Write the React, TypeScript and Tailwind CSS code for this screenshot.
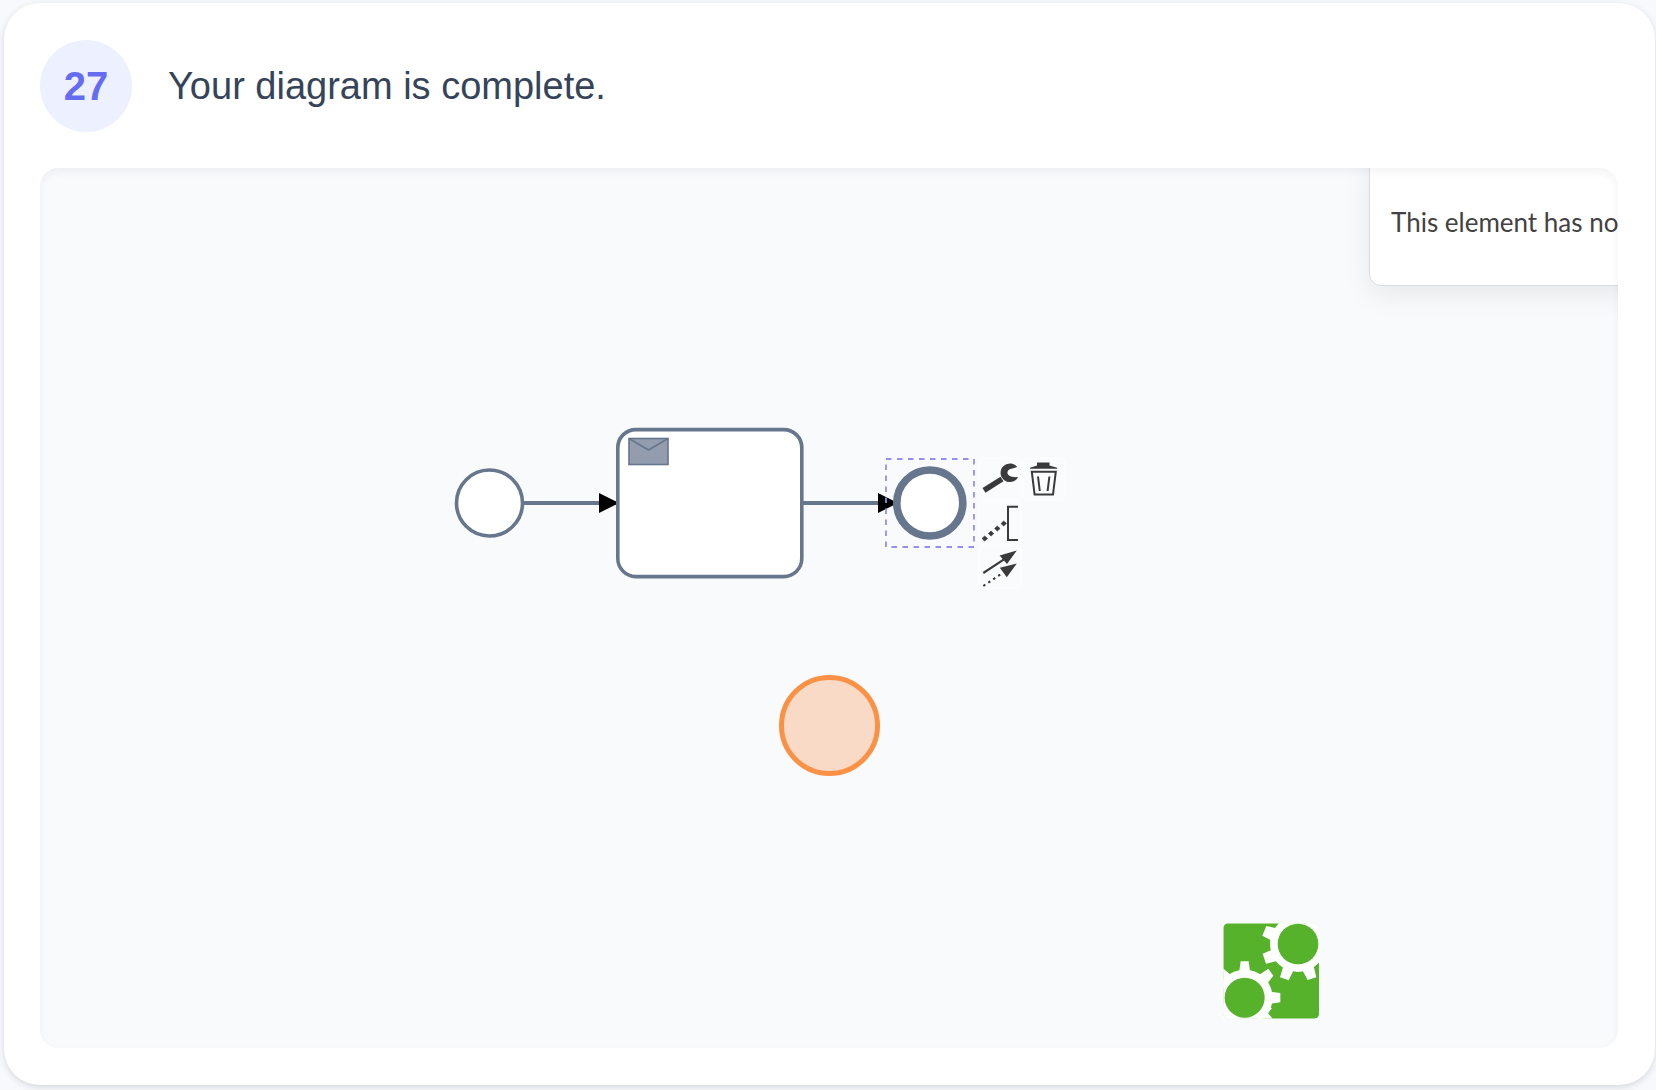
import React from "react";

function PadButton({ label, children }: { label: string; children: React.ReactNode }) {
  return (
    <button
      type="button"
      aria-label={label}
      className="h-11 w-11 rounded-md border-2 border-[#fbfcfe] bg-[#fafbfc] text-[#3a3a3a]"
    >
      <svg viewBox="2 2 40 40" className="block h-10 w-10 overflow-visible" fill="none" stroke="currentColor" aria-hidden="true">
        {children}
      </svg>
    </button>
  );
}

function ContextPad() {
  return (
    <div className="absolute left-[938px] top-[289px] grid grid-cols-2">
      <PadButton label="Change element">
        <path d="M6 33.4 24 22" strokeWidth="5.6" />
        <path
          d="M39.2 10A9.3 9.3 0 1 0 40 20.2L35.6 20C27.6 19.6 27.4 12.4 34.6 11.6Z"
          fill="currentColor"
          stroke="none"
        />
      </PadButton>
      <PadButton label="Delete">
        <path d="M8 11.8V10.8L15 8.6V5.6H27.5V8.6L35.2 10.8V11.8Z" fill="currentColor" stroke="none" />
        <path d="M9.8 14.7H33.8L31 37.6H12.6Z" strokeWidth="2" />
        <path d="M16 19.5 17.8 34M27.4 19.5 25.6 34" strokeWidth="2" />
      </PadButton>
      <PadButton label="Add text annotation">
        <path d="M40 5.7H30V39H40" strokeWidth="2" />
        <path
          d="M6.7 35 9.5 37.5 6.7 40.1 4 37.5ZM13 30 15.8 32.5 13 35.1 10.3 32.5ZM19.3 25 22.1 27.5 19.3 30.1 16.6 27.5ZM25.7 20 28.5 22.5 25.7 25.1 23 22.5Z"
          fill="currentColor"
          strokeWidth="0.6"
        />
      </PadButton>
      <span />
      <PadButton label="Connect to other element">
        <path d="M5.3 28 26 14.4" strokeWidth="2.1" />
        <path d="M38.8 5.4 21.6 10.6 29 19Z" fill="currentColor" stroke="none" />
        <path d="M5.3 41 25 27.7" strokeWidth="2.1" strokeDasharray="2.4 3.6" />
        <path d="M38.8 18.6 21.8 22.8 28.8 32.2Z" fill="currentColor" stroke="none" />
      </PadButton>
    </div>
  );
}

function Diagram() {
  return (
    <svg
      viewBox="380 240 580 190"
      className="absolute left-[380px] top-60 h-[190px] w-[580px]"
      role="img"
      aria-label="Process: start event, message task, end event"
    >
      <g stroke="#66768c" strokeWidth="4" fill="white">
        <path d="M484 335H576M763 335H855" />
        <circle cx="449.5" cy="335" r="33" strokeWidth="3.6" />
      </g>
      <path d="M559 325 579 335 559 345ZM838 325 858 335 838 345Z" fill="black" />
      <rect x="577.8" y="261.6" width="184" height="147" rx="18" fill="white" stroke="#66768c" strokeWidth="3.6" />
      <g stroke="#66768c" strokeWidth="1.6">
        <rect x="589" y="270.5" width="39" height="26" fill="#939dae" />
        <path d="M589 270.5 608.5 282 628 270.5" fill="none" />
      </g>
      <circle cx="889.8" cy="335" r="33" fill="white" stroke="#66768c" strokeWidth="7.6" />
      <rect x="846" y="291" width="88" height="88" fill="none" stroke="#938ff0" strokeWidth="1.8" strokeDasharray="5.5 5.5" />
    </svg>
  );
}

function GearsLogo() {
  return (
    <a href="#bpmn" aria-label="Powered by gears" className="absolute left-[1183px] top-[755px] block h-24 w-24">
      <svg viewBox="39 41 288 288" className="h-24 w-24" aria-hidden="true">
        <clipPath id="tile">
          <rect x="40" y="42" width="287" height="286" rx="14" />
        </clipPath>
        <rect x="39" y="41" width="288" height="288" fill="white" />
        <g clipPath="url(#tile)">
          <rect x="40" y="42" width="287" height="286" fill="#56b22a" />
          <g fill="white">
            <circle cx="264" cy="104" r="84" />
            <path d="M169 50 204 58 186 94 157 79ZM158 133 184 122 204 154 168 163ZM221 168 250 184 236 213 210 204ZM278 184 310 166 319 204 293 212ZM290 42H327V84ZM196 56 206 42H240V80Z" />
            <circle cx="104" cy="265" r="84" />
            <path d="M92 156H116L121 192H87ZM175 178 190 199 174 220 148 196ZM180 247 211 251V279L180 283ZM186 296 174 312 188 328H140V290ZM38 176 58 193 70 200 38 240ZM38 280 90 330H38Z" />
          </g>
          <g fill="#56b22a">
            <circle cx="264" cy="104" r="61" />
            <circle cx="104" cy="265" r="60" />
          </g>
        </g>
      </svg>
    </a>
  );
}

export default function App() {
  return (
    <div className="min-h-screen bg-[#f8f9fc] pb-1 pl-1 pr-px pt-[3px]">
      <main className="rounded-[36px] bg-white pb-[37px] pl-9 pr-[37px] pt-[37px] shadow-[0_2px_6px_rgba(50,50,80,0.17)]">
        <header className="mb-9 flex items-center gap-9">
          <div className="flex h-[92px] w-[92px] shrink-0 items-center justify-center rounded-full bg-[#edf1ff] font-['Liberation_Sans',sans-serif] text-[40px] font-bold leading-none text-[#666cf1]">
            27
          </div>
          <h1 className="font-['Liberation_Sans',sans-serif] text-[38px] leading-[48px] text-[#36445a]">Your diagram is complete.</h1>
        </header>
        <section className="relative aspect-[1578/880] overflow-hidden rounded-[18px] bg-[#f9fafc]">
          <Diagram />
          <ContextPad />
          <div className="absolute left-[739px] top-[507px] h-[101px] w-[101px] rounded-full border-[5px] border-[#fb9145] bg-[#f8dac6]" />
          <aside className="absolute -top-4 left-[1329px] w-[420px] rounded-xl border border-[#dadbdc] bg-white px-[21px] pb-[45px] pt-[51px] shadow-[0_8px_28px_rgba(0,0,0,0.08)]">
            <p className="whitespace-nowrap font-['Lato',sans-serif] text-[26px] leading-9 text-[#424242]">This element has no</p>
          </aside>
          <GearsLogo />
          <div className="pointer-events-none absolute inset-0 rounded-[18px] shadow-[inset_0_4px_9px_rgba(40,40,70,0.05)]" />
        </section>
      </main>
    </div>
  );
}
